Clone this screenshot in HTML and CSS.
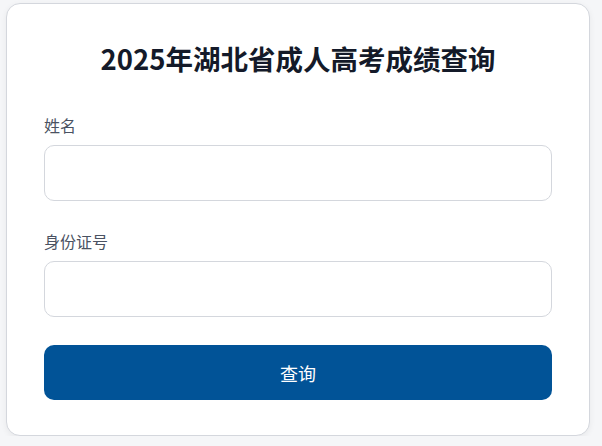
FILE: index.html
```html
<!DOCTYPE html>
<html lang="zh-CN">

<head>
  <meta charset="UTF-8">
  <meta name="viewport" content="width=device-width, initial-scale=1">
  <title>2025年湖北省成人高考成绩查询</title>

  <link rel="stylesheet" href="styles.css">
</head>

<body>
  <div class="card">
    <h1 class="titulo">2025年湖北省成人高考成绩查询</h1>

    <form class="form">
      <div class="campo">
        <label for="nome" class="rotulo">姓名</label>
        <input id="nome" class="entrada" type="text">
      </div>

      <div class="campo">
        <label for="sfz" class="rotulo">身份证号</label>
        <input id="sfz" class="entrada" type="text">
      </div>

      <button type="button" class="botao">查询</button>
    </form>
  </div>
</body>

</html>
```

FILE: styles.css
```css
* {
  margin: 0;
  padding: 0;
  box-sizing: border-box;
}

body {
  background-color: #f5f6f8;
  font-family: "Noto Sans CJK SC", "Noto Sans", sans-serif;
  padding: 3px 0 0 6px;
}

.card {
  width: 584px;
  background-color: #fff;
  border: 1px solid #d4d7dd;
  border-radius: 14px;
  padding: 36px 37px 35px 37px;
  box-shadow: 0 2px 6px rgba(0, 0, 0, 0.06);
}

.titulo {
  text-align: center;
  font-size: 27.5px;
  line-height: 36px;
  font-weight: 700;
  color: #141a29;
  margin-bottom: 37px;
}

.form {
  display: flex;
  flex-direction: column;
}

.campo {
  display: flex;
  flex-direction: column;
  margin-bottom: 28px;
}

.rotulo {
  font-size: 16px;
  line-height: 24px;
  color: #4a5262;
  margin-bottom: 8px;
}

.entrada {
  height: 56px;
  border: 1px solid #d4d7dd;
  border-radius: 10px;
  padding: 0 14px;
  font-size: 16px;
  outline: none;
}

.botao {
  height: 55px;
  border: none;
  border-radius: 10px;
  background-color: #015397;
  color: #fff;
  font-family: inherit;
  font-size: 18px;
  cursor: pointer;
}
```
